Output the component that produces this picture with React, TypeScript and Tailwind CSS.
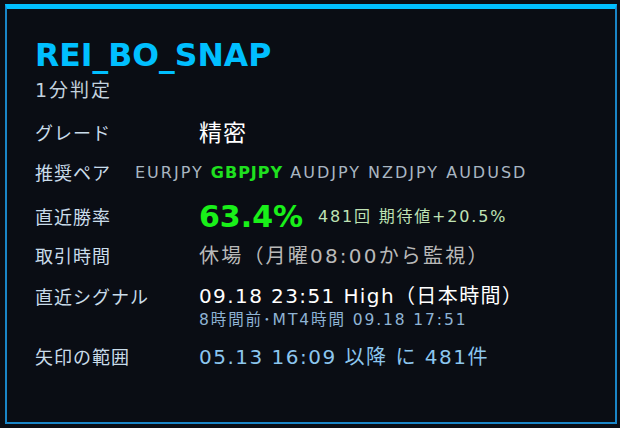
import React from "react";

const LAT = { fontFamily: '"DejaVu Sans", "Noto Sans CJK JP", sans-serif' } as React.CSSProperties;

function Label({ children, w = "w-[164px]" }: { children: React.ReactNode; w?: string }) {
  return (
    <div className={`${w} shrink-0 text-[18px] tracking-[1px] text-[#c9dcea]`} style={LAT}>
      {children}
    </div>
  );
}

export default function App() {
  return (
    <div className="w-[620px] h-[428px] bg-[#0a0d14] pt-[4px] pl-[5px] pr-[3px] pb-[4px]" style={LAT}>
      <div className="h-full border-t-[5px] border-t-[#00bfff] border-x-2 border-b-2 border-x-[#1a86c8] border-b-[#1a86c8] bg-[#0a0d14] pl-[28px] pt-[28px] flex flex-col">
        <div className="h-[37px] flex items-center text-[31.5px] font-bold text-[#00bfff] leading-none">REI_BO_SNAP</div>
        <div className="mt-[4px] h-[24px] flex items-center text-[19px] text-[#c3d2de] tracking-[2px]">1分判定</div>

        <div className="mt-[15px] h-[32px] flex items-center">
          <Label>グレード</Label>
          <div className="text-[23px] text-white tracking-[1px]">精密</div>
        </div>

        <div className="mt-[8px] h-[32px] flex items-center">
          <Label w="w-[100px]">推奨ペア</Label>
          <div className="text-[16px] tracking-[2px] text-[#a9b6c2] whitespace-nowrap">
            EURJPY <span className="font-bold text-[#1fe01f] tracking-[1px]">GBPJPY</span> AUDJPY NZDJPY AUDUSD
          </div>
        </div>

        <div className="mt-[10px] h-[36px] flex items-center">
          <Label>直近勝率</Label>
          <div className="text-[30px] font-bold text-[#19f019] leading-none">63.4%</div>
          <div className="ml-[15px] text-[16px] tracking-[1.8px] text-[#bfe2b4] whitespace-nowrap">481回 期待値+20.5%</div>
        </div>

        <div className="mt-[5px] h-[32px] flex items-center">
          <Label>取引時間</Label>
          <div className="text-[20px] tracking-[2.2px] text-[#b9b9b9] whitespace-nowrap">休場（月曜08:00から監視）</div>
        </div>

        <div className="mt-[10px] flex">
          <Label><div className="h-[30px] flex items-center">直近シグナル</div></Label>
          <div className="flex flex-col">
            <div className="h-[28px] flex items-center text-[20px] tracking-[1.4px] text-white whitespace-nowrap">09.18 23:51 High（日本時間）</div>
            <div className="h-[21px] flex items-center text-[15.5px] tracking-[1.9px] text-[#8fb4d4] whitespace-nowrap">8時間前･MT4時間 09.18 17:51</div>
          </div>
        </div>

        <div className="mt-[11px] h-[30px] flex items-center">
          <Label>矢印の範囲</Label>
          <div className="text-[20px] tracking-[1.5px] text-[#8cc6ee] whitespace-nowrap">05.13 16:09 以降 に 481件</div>
        </div>
      </div>
    </div>
  );
}
